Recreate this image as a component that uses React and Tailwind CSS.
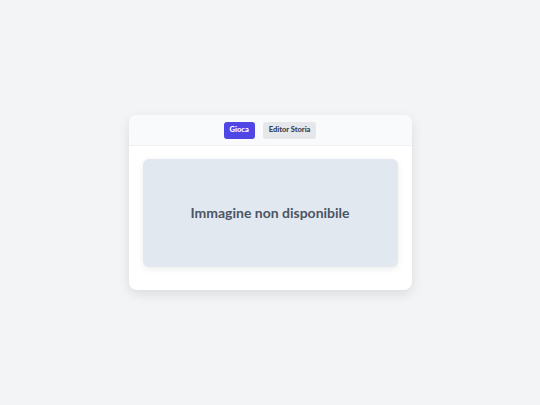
export default function App() {
  return (
    <div
      className="flex h-screen w-full items-center justify-center bg-[#f3f4f6]"
      style={{ fontFamily: "Lato, 'Noto Sans', sans-serif" }}
    >
      <div className="w-[283px] overflow-hidden rounded-lg bg-white shadow-[0_4px_12px_rgba(0,0,0,0.1)]">
        {/* Tabs */}
        <div className="flex h-[31px] items-center justify-center gap-[8px] border-b border-[#eef0f3] bg-[#f9fafb]">
          <button className="h-[17px] rounded-[3px] bg-[#4f46e5] px-[6px] text-[7.5px] font-black text-white">
            Gioca
          </button>
          <button className="h-[17px] rounded-[3px] bg-[#e5e7eb] px-[6px] text-[7.5px] font-black text-[#374151]">
            Editor Storia
          </button>
        </div>

        {/* Content */}
        <div className="px-[14px] pt-[13px] pb-[23px]">
          <div className="flex h-[108px] items-center justify-center rounded-md bg-[#e2e8f0] shadow-[0_2px_6px_rgba(0,0,0,0.08)]">
            <span className="-mt-[2px] text-[14px] font-bold text-[#4b5563]">
              Immagine non disponibile
            </span>
          </div>
        </div>
      </div>
    </div>
  );
}
